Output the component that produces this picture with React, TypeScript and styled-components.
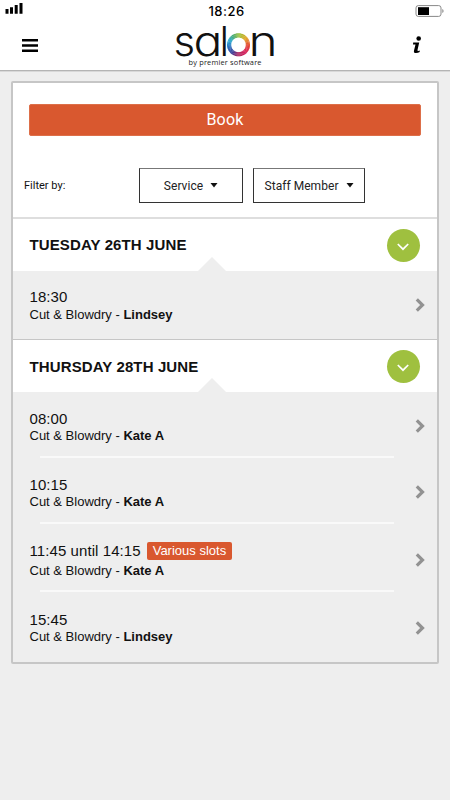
import React from "react";
import styled, { createGlobalStyle } from "styled-components";

const Global = createGlobalStyle`
  * { box-sizing: border-box; }
  html, body { margin: 0; padding: 0; background: #eeeeee; }
  body { font-family: "Liberation Sans", Arial, sans-serif; color: #111; }
`;

const Screen = styled.div`
  width: 450px;
  height: 800px;
  overflow: hidden;
  background: #eeeeee;
`;

const Top = styled.header`
  height: 71px;
  background: #fff;
  border-bottom: 1px solid #b4b4b4;
  box-shadow: 0 1px 0 #d8d8d8;
`;

const StatusBar = styled.div`
  display: grid;
  grid-template-columns: 1fr auto 1fr;
  align-items: center;
  height: 22px;
  padding: 0 6px 0 5px;
`;

const Clock = styled.span`
  font: 450 13px/22px Inter, sans-serif;
  letter-spacing: 0.5px;
  padding-left: 4px;
  color: #000;
`;

const BatteryIcon = styled.svg`
  justify-self: end;
`;

const NavBar = styled.div`
  display: grid;
  grid-template-columns: 100px 1fr 100px;
  height: 48px;
`;

const NavButton = styled.button<{ $end?: boolean }>`
  display: flex;
  border: 0;
  background: none;
  justify-content: ${(p) => (p.$end ? "flex-end" : "flex-start")};
  padding: ${(p) => (p.$end ? "14px 28px 0 0" : "17px 0 0 22px")};
`;

const Brand = styled.svg`
  justify-self: center;
  display: block;
  overflow: visible;
`;

const Card = styled.main`
  width: 428px;
  margin: 10px 0 0 11px;
  border: 2px solid #c6c6c6;
  border-radius: 2px;
  background: #fff;
`;

const BookArea = styled.div`
  padding: 21px 16px 0;
  height: 75px;
`;

const BookButton = styled.button`
  display: block;
  width: 392px;
  height: 32px;
  padding: 0;
  border: 1px solid #dd6f49;
  border-radius: 2px;
  background: #d9582f;
  color: #fff;
  font: 400 16px/28px Roboto, sans-serif;
  letter-spacing: 0.2px;
`;

const Filters = styled.div`
  display: flex;
  align-items: center;
  height: 59px;
  padding: 0 0 4px 11px;
`;

const FilterLabel = styled.span`
  width: 115px;
  font: 400 11px/14px Roboto, sans-serif;
`;

const FilterButton = styled.button<{ $w: number }>`
  display: flex;
  align-items: center;
  justify-content: center;
  gap: 7px;
  width: ${(p) => p.$w}px;
  height: 35px;
  margin-right: 10px;
  padding: 0;
  border: 1px solid #333;
  border-top-color: #777;
  background: #fff;
  color: #222;
  white-space: nowrap;
  font: 400 12px/16px Roboto, sans-serif;
  letter-spacing: 0.05px;
`;

const DayHeader = styled.div<{ $first?: boolean }>`
  display: flex;
  align-items: center;
  justify-content: space-between;
  position: relative;
  height: ${(p) => (p.$first ? 54 : 53)}px;
  padding: ${(p) => (p.$first ? 0 : 1)}px 17px 0 16.5px;
  border-top: ${(p) => (p.$first ? "2px solid #dedede" : "1px solid #c6c6c6")};
  background: #fff;
  &::after {
    content: "";
    position: absolute;
    left: 185px;
    bottom: 0;
    border: 14px solid transparent;
    border-top: 0;
    border-bottom-color: #eee;
  }
`;

const DayTitle = styled.h2`
  margin: 0;
  font-size: 15px;
  line-height: 18px;
  font-weight: 700;
  letter-spacing: 0.12px;
`;

const Toggle = styled.button`
  display: flex;
  align-items: center;
  justify-content: center;
  width: 33px;
  height: 33px;
  padding: 3px 1px 0 0;
  border: 0;
  border-radius: 50%;
  background: #9fc03f;
`;

const Slot = styled.div<{ $h: number; $pad: number }>`
  display: flex;
  justify-content: space-between;
  position: relative;
  height: ${(p) => p.$h}px;
  padding: ${(p) => p.$pad}px 11px 0 16.5px;
  background: #eee;
`;

const Divider = styled.span`
  position: absolute;
  left: 27px;
  right: 43px;
  bottom: 0;
  height: 2px;
  background: #f9f9f9;
`;

const Time = styled.div`
  display: flex;
  align-items: center;
  gap: 6px;
  font-size: 15px;
  line-height: 18px;
  letter-spacing: 0.08px;
`;

const Detail = styled.div<{ $gap: number }>`
  padding-top: ${(p) => p.$gap}px;
  font-size: 13px;
  line-height: 16px;
`;

const Badge = styled.span`
  height: 18px;
  padding: 0 6px;
  border-radius: 2px;
  background: #d9582f;
  color: #fff;
  font-size: 13px;
  line-height: 18px;
  letter-spacing: 0;
`;

const Arrow = styled.svg<{ $top: number }>`
  margin-top: ${(p) => p.$top}px;
`;

const Caret = () => (
  <svg width="8" height="5" viewBox="0 0 8 5"><path d="M0.5 0h7L4 4.5z" fill="#111" /></svg>
);

const ringStops: [number, number[]][] = [
  [0, [150, 190, 50]], [45, [225, 170, 40]], [90, [228, 70, 50]], [135, [215, 30, 90]],
  [180, [170, 30, 90]], [215, [60, 60, 150]], [255, [40, 110, 190]], [295, [40, 170, 210]],
  [325, [70, 170, 120]], [360, [150, 190, 50]],
];

const ringColor = (deg: number) => {
  const i = ringStops.findIndex(([d]) => d > deg);
  const [d0, a] = ringStops[i - 1];
  const [d1, b] = ringStops[i];
  const t = (deg - d0) / (d1 - d0);
  return `rgb(${a.map((v, k) => Math.round(v + (b[k] - v) * t)).join(",")})`;
};

const Ring = ({ cx, cy, r }: { cx: number; cy: number; r: number }) => (
  <g fill="none" strokeWidth="4.2">
    {Array.from({ length: 60 }, (_, i) => {
      const p = (d: number) => {
        const a = ((d - 90) * Math.PI) / 180;
        return `${(cx + r * Math.cos(a)).toFixed(2)} ${(cy + r * Math.sin(a)).toFixed(2)}`;
      };
      return <path key={i} d={`M${p(i * 6 - 0.6)}A${r} ${r} 0 0 1 ${p(i * 6 + 6.6)}`} stroke={ringColor(i * 6)} />;
    })}
  </g>
);

const LogoText = styled.text`
  font-family: Inter, sans-serif;
  font-size: 41px;
  font-weight: 350;
  font-feature-settings: "cv11" 1;
  fill: #111;
`;

const Tagline = styled.text`
  font-family: "Open Sans", sans-serif;
  font-size: 7.4px;
  fill: #222;
`;

const Logo = () => (
  <Brand width="110" height="48" viewBox="170 22 110 48" role="img" aria-label="salon by premier software">
    <LogoText transform="translate(173.6 56) scale(1.02 1)">s</LogoText>
    <LogoText transform="translate(193.4 56) scale(1.17 1)">a</LogoText>
    <LogoText transform="translate(219.4 56)">l</LogoText>
    <Ring cx={238.5} cy={44.8} r={9.4} />
    <LogoText transform="translate(248.6 56) scale(1.21 1)">n</LogoText>
    <Tagline x="188.5" y="65" textLength="73">by premier software</Tagline>
  </Brand>
);

const RowArrow = ({ top }: { top: number }) => (
  <Arrow $top={top} width="12" height="16" viewBox="0 0 12 16">
    <path d="M2.8 2.3L8.5 8l-5.7 5.7" fill="none" stroke="#929292" strokeWidth="3.2" />
  </Arrow>
);

type SlotData = { time: string; staff: string; h: number; pad: number; gap: number; arrow: number; badge?: string };

const days: { title: string; slots: SlotData[] }[] = [
  { title: "TUESDAY 26TH JUNE", slots: [{ time: "18:30", staff: "Lindsey", h: 68, pad: 17, gap: 0.5, arrow: 9 }] },
  {
    title: "THURSDAY 28TH JUNE",
    slots: [
      { time: "08:00", staff: "Kate A", h: 66, pad: 18, gap: 0, arrow: 8 },
      { time: "10:15", staff: "Kate A", h: 66, pad: 18, gap: 0, arrow: 8 },
      { time: "11:45 until 14:15", staff: "Kate A", h: 68, pad: 18, gap: 3, arrow: 10, badge: "Various slots" },
      { time: "15:45", staff: "Lindsey", h: 70, pad: 19, gap: 0, arrow: 9 },
    ],
  },
];

export default function App() {
  return (
    <Screen>
      <Global />
      <Top>
        <StatusBar>
          <svg width="18" height="16" viewBox="0 0 18 16">
            <path d="M.5 6h3v4.7h-3zM5 4.2h3v6.5H5zM9.7 2h3v8.7h-3zM14.5 0h3v10.7h-3z" />
          </svg>
          <Clock>18:26</Clock>
          <BatteryIcon width="29" height="12" viewBox="0 0 29 12">
            <rect x="1" y=".6" width="25" height="10.8" rx="2.3" fill="none" stroke="#888" />
            <rect x="3" y="2.2" width="11" height="7.8" />
            <path d="M27.3 4v4q1.3-.5 1.3-2t-1.3-2z" fill="#888" />
          </BatteryIcon>
        </StatusBar>
        <NavBar>
          <NavButton aria-label="Menu">
            <svg width="16" height="14" viewBox="0 0 16 14"><path d="M0 0h16v2.5H0zM0 5.3h16v2.5H0zM0 10.5h16V13H0z" /></svg>
          </NavButton>
          <Logo />
          <NavButton $end aria-label="Information">
            <svg width="10" height="18" viewBox="0 0 10 18">
              <circle cx="6.7" cy="2.5" r="2.3" />
              <path d="M1.2 6.5h6L5.5 14q-.2 1 .7 1l1.5-.5v1.6q-1.7 1-3.7 1-2.6 0-2-2.6L3.5 8.6H1z" />
            </svg>
          </NavButton>
        </NavBar>
      </Top>
      <Card>
        <BookArea><BookButton>Book</BookButton></BookArea>
        <Filters>
          <FilterLabel>Filter by:</FilterLabel>
          <FilterButton $w={104}>Service <Caret /></FilterButton>
          <FilterButton $w={112}>Staff Member <Caret /></FilterButton>
        </Filters>
        {days.map((day, i) => (
          <section key={day.title}>
            <DayHeader $first={i === 0}>
              <DayTitle>{day.title}</DayTitle>
              <Toggle aria-label="Toggle day">
                <svg width="12" height="8" viewBox="0 0 12 8"><path d="M.8 1L6 6.2 11.2 1" fill="none" stroke="#fff" strokeWidth="1.7" /></svg>
              </Toggle>
            </DayHeader>
            {day.slots.map((s, k) => (
              <Slot key={s.time} $h={s.h} $pad={s.pad}>
                <div>
                  <Time>{s.time}{s.badge && <Badge>{s.badge}</Badge>}</Time>
                  <Detail $gap={s.gap}>Cut &amp; Blowdry - <b>{s.staff}</b></Detail>
                </div>
                <RowArrow top={s.arrow} />
                {k < day.slots.length - 1 && <Divider />}
              </Slot>
            ))}
          </section>
        ))}
      </Card>
    </Screen>
  );
}
